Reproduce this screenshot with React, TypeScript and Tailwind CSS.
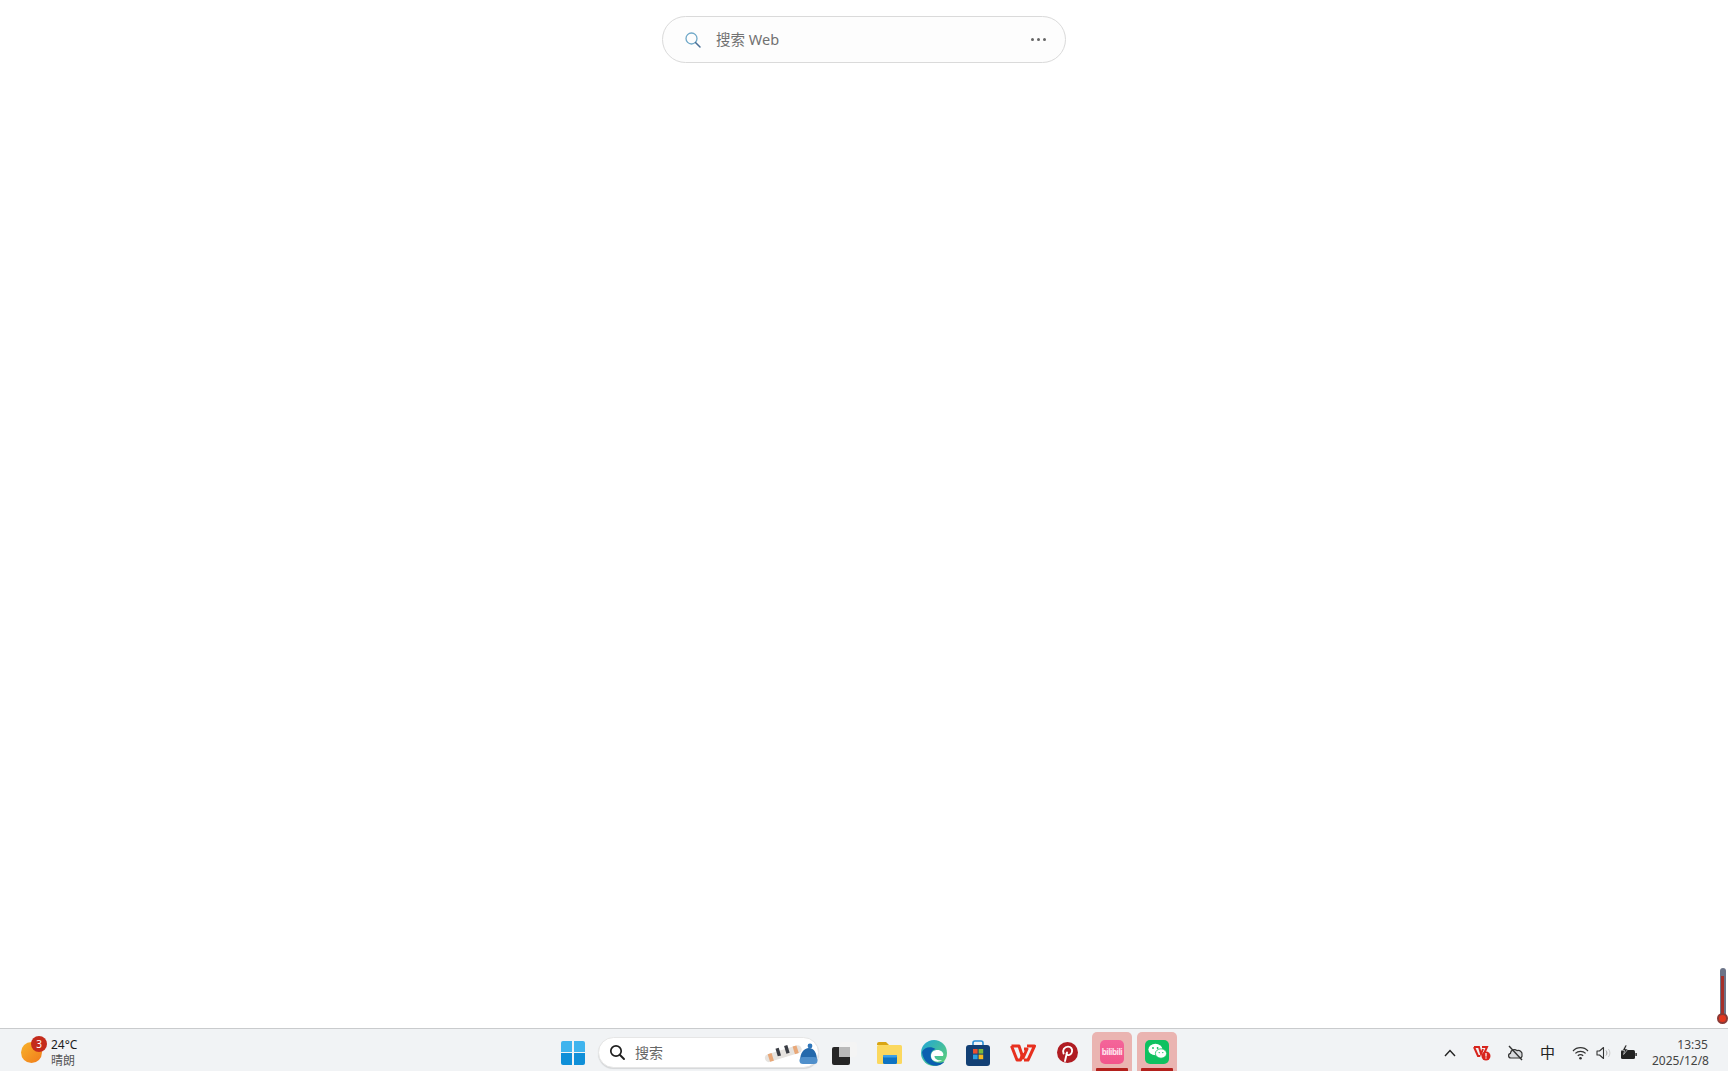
const FONT = "font-['Noto_Sans','Noto_Sans_CJK_SC',sans-serif]";

function WebSearch() {
  return (
    <div className="mx-auto mt-4 flex h-[47px] w-[404px] items-center rounded-full border border-[#dadada] bg-[#fdfdfd] pl-[21px] pr-[19px]">
      <svg width="18" height="18" viewBox="0 0 18 18" fill="none" className="shrink-0">
        <circle cx="7.5" cy="7.5" r="5.5" stroke="#6fa8c8" strokeWidth="1.3" />
        <path d="M11.5 11.5 L16 16" stroke="#4a6f96" strokeWidth="1.5" strokeLinecap="round" />
      </svg>
      <span className="ml-[14px] flex-1 text-[14.5px] text-[#717171]">搜索 Web</span>
      <div className="flex gap-[3px]">
        <span className="h-[3px] w-[3px] rounded-full bg-[#666]" />
        <span className="h-[3px] w-[3px] rounded-full bg-[#666]" />
        <span className="h-[3px] w-[3px] rounded-full bg-[#666]" />
      </div>
    </div>
  );
}

function Weather() {
  return (
    <div className="flex items-center pl-[21px] pt-[5px]">
      <div className="relative h-[21px] w-[21px] rounded-full bg-gradient-to-br from-[#f7b32b] to-[#f07a1a]">
        <span className="absolute -right-[5px] -top-[6px] flex h-[16px] w-[16px] items-center justify-center rounded-full bg-[#c42b1c] text-[10px] text-white">
          3
        </span>
      </div>
      <div className="ml-[9px] text-[12px] leading-[16px] text-[#1c1c1c]">
        <div>24°C</div>
        <div className="text-[#555]">晴朗</div>
      </div>
    </div>
  );
}

function WinLogo() {
  return (
    <div className="grid h-6 w-6 grid-cols-2 gap-[1.5px]">
      <span className="rounded-tl-[2px] bg-[#3fb4ee]" />
      <span className="rounded-tr-[2px] bg-[#3fb4ee]" />
      <span className="rounded-bl-[2px] bg-[#0f8fd8]" />
      <span className="rounded-br-[2px] bg-[#0f8fd8]" />
    </div>
  );
}

function TaskSearch() {
  return (
    <div className="ml-[13px] flex h-[31px] w-[221px] items-center rounded-full border border-[#e6e6e6] bg-white pl-[10px] shadow-[0_1px_1px_rgba(0,0,0,0.12)]">
      <svg width="17" height="17" viewBox="0 0 17 17" fill="none" className="shrink-0">
        <circle cx="7" cy="7" r="5.2" stroke="#1f1f1f" strokeWidth="1.7" />
        <path d="M11 11 L15 15" stroke="#1f1f1f" strokeWidth="1.9" strokeLinecap="round" />
      </svg>
      <span className="ml-[9px] flex-1 text-[14px] text-[#666]">搜索</span>
      {/* snowboard + hat */}
      <svg width="54" height="24" viewBox="0 0 54 24" className="shrink-0">
        <g transform="rotate(-17 18 12)">
          <rect x="0" y="9" width="38" height="8" rx="4" fill="#e6e3df" />
          <rect x="4" y="9" width="4" height="8" fill="#e9a878" />
          <rect x="30" y="9" width="4" height="8" fill="#e9a878" />
          <rect x="13" y="6" width="3.4" height="8" fill="#3a3d44" />
          <rect x="22" y="6" width="3.4" height="8" fill="#3a3d44" />
        </g>
        <path d="M36 20 C36 12 40 7 45 7 C50 7 53 12 53 20 Z" fill="#2469ac" />
        <circle cx="46" cy="5" r="2.4" fill="#2f76ba" />
        <rect x="35.5" y="16" width="18" height="7" rx="3.5" fill="#4f8fcb" />
      </svg>
    </div>
  );
}

function TaskView() {
  return (
    <svg width="25" height="25" viewBox="0 0 25 25" className="mr-px">
      <rect x="8" y="2" width="17" height="15" rx="2" fill="#f4f4f4" />
      <rect x="0" y="7" width="18" height="18" rx="2" fill="#262626" />
      <rect x="7" y="7" width="11" height="10" fill="#b9b9b9" />
    </svg>
  );
}

function Folder() {
  return (
    <svg width="25" height="23" viewBox="0 0 25 23">
      <path d="M0 3 a2 2 0 0 1 2-2 h7 l3 3 h-12z" fill="#d9a514" />
      <rect x="0" y="4" width="25" height="19" rx="1.5" fill="#fbd85f" />
      <rect x="6" y="14" width="14" height="9" rx="1.5" fill="#0f73c2" />
      <rect x="6" y="14" width="14" height="2.5" rx="1" fill="#3ba0e6" />
    </svg>
  );
}

function Edge() {
  return (
    <svg width="26" height="26" viewBox="0 0 26 26">
      <defs>
        <linearGradient id="edgeTop" x1="0" y1="0" x2="1" y2="1">
          <stop offset="0" stopColor="#1fa4d8" />
          <stop offset="1" stopColor="#62d36f" />
        </linearGradient>
      </defs>
      <circle cx="13" cy="13" r="13" fill="url(#edgeTop)" />
      <path d="M1 12 C2 22 10 27 17 25.5 C20 25 22 23.5 23.5 21.5 C19 24 12 23 10 18 C8.5 14 11 10 14.5 9 C10 6 3 7 1 12Z" fill="#0b5fb0" />
      <path d="M10 16 C10 11 15 9 19 10.5 C22 11.5 23 14 22 16 L13.5 16 C13.5 19 17 21 21 20 C18 23 10 22 10 16Z" fill="#ffffff" />
    </svg>
  );
}

function Store() {
  return (
    <svg width="24" height="26" viewBox="0 0 24 26">
      <path d="M7 6 V3 a2 2 0 0 1 2-2 h6 a2 2 0 0 1 2 2 V6" fill="none" stroke="#2a8fd6" strokeWidth="1.6" />
      <rect x="0" y="5" width="24" height="21" rx="3" fill="#123f74" />
      <rect x="7" y="9" width="4.6" height="4.6" fill="#e8502f" />
      <rect x="12.6" y="9" width="4.6" height="4.6" fill="#7cba3c" />
      <rect x="7" y="14.6" width="4.6" height="4.6" fill="#2a9fe0" />
      <rect x="12.6" y="14.6" width="4.6" height="4.6" fill="#f6b91f" />
    </svg>
  );
}

function Wps() {
  return (
    <svg width="26" height="18" viewBox="0 0 26 18" fill="none" className="ml-px">
      <path d="M1.5 2 H9 L13 14 L17 5 L14 5" stroke="#e7301f" strokeWidth="3" strokeLinejoin="round" />
      <path d="M1.5 2 L7 16 L10.5 16 L13 9" stroke="#e7301f" strokeWidth="3" strokeLinejoin="round" />
      <path d="M14 16 L18 16 L24.5 2 L17 2" stroke="#e7301f" strokeWidth="3" strokeLinejoin="round" />
    </svg>
  );
}

function Pinterest() {
  return (
    <svg width="21" height="21" viewBox="0 0 21 21" className="ml-[2px]">
      <circle cx="10.5" cy="10.5" r="10.5" fill="#b01c22" />
      <path
        d="M8 19 L10 10.5 M6.6 11.5 C5 8 7.6 4.6 11 4.6 C14 4.6 15.6 6.8 15 9.6 C14.4 12.4 12.2 13.6 10.6 12.9 C9.8 12.5 9.5 12 9.4 11.6"
        fill="none"
        stroke="#fff"
        strokeWidth="1.9"
        strokeLinecap="round"
      />
    </svg>
  );
}

function RunningTile({ children }: { children: React.ReactNode }) {
  return (
    <div className="relative flex h-[39px] w-10 items-center justify-center rounded-t-[5px] bg-[#eab4b1]">
      {children}
      <span className="absolute bottom-0 left-1/2 h-[3px] w-8 -translate-x-1/2 rounded-t-[1px] bg-[#b3201c]" />
    </div>
  );
}

function Bilibili() {
  return (
    <div className="flex h-6 w-6 items-center justify-center overflow-hidden rounded-[5px] bg-gradient-to-b from-[#f4659a] to-[#f2558b] text-[8px] font-bold tracking-[-0.5px] text-[#ffe4ee]">
      bilibili
    </div>
  );
}

function WeChat() {
  return (
    <div className="flex h-6 w-6 items-center justify-center rounded-[5px] bg-[#0fc160]">
      <svg width="19" height="17" viewBox="0 0 19 17">
        <ellipse cx="7.4" cy="6.5" rx="7" ry="5.8" fill="#fff" />
        <ellipse cx="13" cy="10.5" rx="5.6" ry="4.7" fill="#fff" stroke="#0fc160" strokeWidth="0.8" />
        <circle cx="5" cy="5" r="0.9" fill="#0fc160" />
        <circle cx="9.6" cy="5" r="0.9" fill="#0fc160" />
        <circle cx="11.2" cy="9.6" r="0.7" fill="#0fc160" />
        <circle cx="14.8" cy="9.6" r="0.7" fill="#0fc160" />
      </svg>
    </div>
  );
}

function Tray() {
  return (
    <div className="flex items-center pr-5 pt-[5px]">
      <svg width="12" height="8" viewBox="0 0 12 8" fill="none">
        <path d="M1 7 L6 1.5 L11 7" stroke="#222" strokeWidth="1.4" />
      </svg>
      <svg width="18" height="16" viewBox="0 0 18 16" className="ml-[17px]" fill="none">
        <path d="M1 2 H6 L8 9 L10 4 M1 2 L5 11 H7 M10 11 L14 2 H9" stroke="#d8241c" strokeWidth="2" />
        <circle cx="13" cy="11" r="4.5" fill="#d8241c" />
        <rect x="12.4" y="8" width="1.2" height="3.6" fill="#fff" />
        <rect x="12.4" y="12.4" width="1.2" height="1.2" fill="#fff" />
      </svg>
      <svg width="17" height="16" viewBox="0 0 17 16" className="ml-4" fill="none">
        <path d="M4 13 C1 13 0.8 9 3.4 8.4 C3.6 5 7.6 3.4 10 5.6 C13 4.8 15.6 7.4 15 10 C15.4 12 14 13 12.6 13 Z" fill="#d8dadd" stroke="#333" strokeWidth="1.2" />
        <path d="M2 1 L15 15" stroke="#333" strokeWidth="1.4" />
      </svg>
      <span className="ml-4 w-[14px] text-center text-[15px] leading-none text-[#222]">中</span>
      <svg width="17" height="14" viewBox="0 0 17 14" className="ml-[18px]" fill="none">
        <path d="M1 5 C5 0.6 12 0.6 16 5" stroke="#333" strokeWidth="1.2" />
        <path d="M3.4 7.4 C6 4.6 11 4.6 13.6 7.4" stroke="#333" strokeWidth="1.2" />
        <path d="M5.8 9.8 C7.4 8.4 9.6 8.4 11.2 9.8" stroke="#333" strokeWidth="1.2" />
        <circle cx="8.5" cy="12.2" r="1.3" fill="#333" />
      </svg>
      <svg width="16" height="14" viewBox="0 0 16 14" className="ml-[7px]" fill="none">
        <path d="M1 5 H3.5 L7.5 1.5 V12.5 L3.5 9 H1 Z" stroke="#333" strokeWidth="1.1" strokeLinejoin="round" />
        <path d="M10 4.5 C11.2 6 11.2 8 10 9.5" stroke="#999" strokeWidth="1" />
        <path d="M12.4 3 C14.4 5.4 14.4 8.6 12.4 11" stroke="#ccc" strokeWidth="1" />
      </svg>
      <svg width="17" height="15" viewBox="0 0 17 15" className="ml-2">
        <rect x="1" y="5" width="14" height="9" rx="1.5" fill="#222" />
        <rect x="15.4" y="8" width="1.4" height="3" fill="#222" />
        <path d="M5.4 0 L2.4 5.4 H4.6 L3.6 9.5 L8 4 H5.4 L7 0 Z" fill="#222" stroke="#f1f3f5" strokeWidth="0.6" />
      </svg>
      <div className="ml-[15px] w-[56px] whitespace-nowrap text-right text-[12px] leading-[16px] text-[#444]">
        <div>13:35</div>
        <div>2025/12/8</div>
      </div>
    </div>
  );
}

export default function App() {
  return (
    <div className={`relative flex h-[1071px] w-[1728px] flex-col overflow-hidden bg-white ${FONT}`}>
      <main className="flex-1">
        <WebSearch />
      </main>

      {/* cursor thermometer widget, sits over the page edge */}
      <div className="absolute right-0 top-[968px] flex h-[57px] w-[11px] flex-col items-center">
        <div className="flex h-[47px] w-[6px] justify-center rounded-t-full bg-[#6c7488] pt-[8px]">
          <div className="h-full w-[3px] bg-[#a6302a]" />
        </div>
        <div className="-mt-[2px] h-[11px] w-[11px] rounded-full border-2 border-[#8a3a36] bg-[#e2371f]" />
      </div>

      <footer className="relative flex h-[43px] items-center justify-between border-t border-[#c9cbcd] bg-[#f1f3f5]">
        <Weather />
        <div className="absolute left-[561px] top-0 flex h-full items-center pt-[5px]">
          <WinLogo />
          <TaskSearch />
          <div className="ml-[13px] flex items-center gap-[19px]">
            <TaskView />
            <Folder />
            <Edge />
            <Store />
            <Wps />
            <Pinterest />
          </div>
          <div className="ml-[14px] flex gap-[5px] self-end">
            <RunningTile>
              <Bilibili />
            </RunningTile>
            <RunningTile>
              <WeChat />
            </RunningTile>
          </div>
        </div>
        <Tray />
      </footer>
    </div>
  );
}
